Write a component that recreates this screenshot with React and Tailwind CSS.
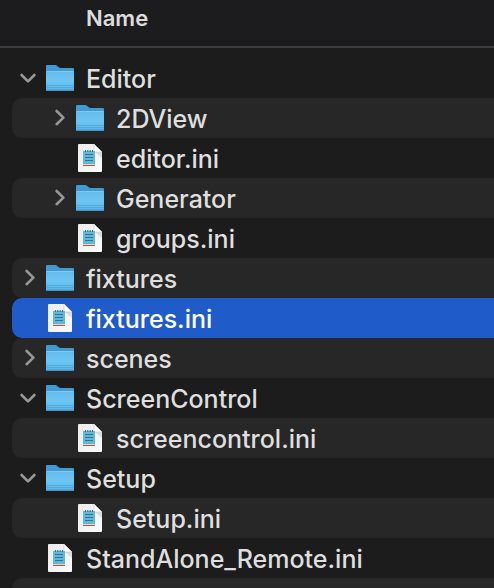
import React, { useState } from 'react';
import clsx from 'clsx';

const FILES = [
  {
    name: 'Editor',
    children: [
      { name: '2DView', children: [] },
      { name: 'editor.ini' },
      { name: 'Generator', children: [] },
      { name: 'groups.ini' },
    ],
  },
  { name: 'fixtures', children: [] },
  { name: 'fixtures.ini' },
  { name: 'scenes', children: [] },
  { name: 'ScreenControl', children: [{ name: 'screencontrol.ini' }] },
  { name: 'Setup', children: [{ name: 'Setup.ini' }] },
  { name: 'StandAlone_Remote.ini' },
];

// Flatten the tree to the rows that are visible right now
const flatten = (nodes, expanded, depth = 0) =>
  nodes.flatMap((node) => {
    const row = { name: node.name, isFolder: !!node.children, depth };
    if (!node.children || !expanded.includes(node.name)) return [row];
    return [row, ...flatten(node.children, expanded, depth + 1)];
  });

const FolderIcon = () => (
  <svg width="28" height="28" viewBox="0 -1 28 28" aria-hidden="true">
    <defs>
      <linearGradient id="folderFront" x1="0" y1="0" x2="0" y2="1">
        <stop offset="0" stopColor="#64bbeb" />
        <stop offset="0.5" stopColor="#6cc5f2" />
        <stop offset="1" stopColor="#58b2e4" />
      </linearGradient>
    </defs>
    <path d="M0 1.2Q0 0 1.2 0H9.3Q10.2 0 11 0.7L12.6 2.2Q13.5 3 14.6 3H26.8Q28 3 28 4.2V14H0Z" fill="#419bd2" />
    <path d="M0 7.2Q0 6 1.2 6H26.8Q28 6 28 7.2V24.8Q28 26 26.8 26H1.2Q0 26 0 24.8Z" fill="url(#folderFront)" />
    <path d="M0.5 6.5H27.5" stroke="#7fcaf2" strokeWidth="1" />
    <path d="M0 20.5H28M0 22.5H28" stroke="#52acde" strokeWidth="1" />
    <path d="M0 24.8H28Q28 26 26.8 26H1.2Q0 26 0 24.8Z" fill="#3f93c8" />
  </svg>
);

const FileIcon = () => (
  <svg width="24" height="28" viewBox="0 0 24 28" aria-hidden="true">
    <defs>
      <linearGradient id="pageFill" x1="0" y1="0" x2="1" y2="1">
        <stop offset="0" stopColor="#ececec" />
        <stop offset="1" stopColor="#fafafa" />
      </linearGradient>
    </defs>
    <path d="M1 0H16L24 8V27Q24 28 23 28H1Q0 28 0 27V1Q0 0 1 0Z" fill="url(#pageFill)" />
    <path d="M17 8H24V14Z" fill="#dcdcdc" />
    <path d="M16 0L24 8H17Q16 8 16 7Z" fill="#ffffff" />
    <path d="M16 0V7Q16 8 17 8H24" fill="none" stroke="#c8c8c8" strokeWidth="0.6" />
    <rect x="5" y="20" width="12" height="2" fill="#a0623c" />
    <rect x="5" y="20" width="12" height="1" fill="#e6d6c8" />
    <rect x="5" y="7" width="12" height="13" fill="#62b8da" />
    <path d="M7.5 6V8M9.8 6V8M12.2 6V8M14.5 6V8" stroke="#2f7391" strokeWidth="1.1" />
    <path d="M7 10.5H15M7 13.5H15M7 16.5H15" stroke="#2d7696" strokeWidth="1" />
  </svg>
);

const Chevron = ({ open }) => (
  <svg width="20" height="20" viewBox="0 0 20 20" fill="none" stroke="#979797" strokeWidth="2.6" strokeLinecap="round" strokeLinejoin="round" aria-hidden="true">
    {open ? <path d="M1.6 7L8 13.4L14.4 7" /> : <path d="M6.6 3L13.4 9.6L6.6 16.2" />}
  </svg>
);

const Row = ({ row, open, striped, selected, onToggle, onSelect }) => (
  <li
    className={clsx(
      'flex h-10 items-center rounded-l-[10px] pl-2',
      selected ? 'bg-[#1f5bc9] text-white' : 'text-[#dfdfdf]',
      !selected && striped && 'bg-[#272727]'
    )}
  >
    {row.depth > 0 && <span className="w-[30px] shrink-0" />}
    <span className="mr-1 size-5 shrink-0">
      {row.isFolder && (
        <button type="button" className="block" aria-label={`Toggle ${row.name}`} aria-expanded={open} onClick={onToggle}>
          <Chevron open={open} />
        </button>
      )}
    </span>
    <button type="button" className="flex min-w-0 flex-1 items-center gap-[10px] text-left" onClick={onSelect}>
      <span className="flex w-8 shrink-0 justify-center">{row.isFolder ? <FolderIcon /> : <FileIcon />}</span>
      <span className="truncate pt-0.5 text-[25px] leading-9 font-medium">{row.name}</span>
    </button>
  </li>
);

const App = () => {
  const [expanded, setExpanded] = useState(['Editor', 'ScreenControl', 'Setup']);
  const [selected, setSelected] = useState('fixtures.ini');

  const toggle = (name) => {
    setExpanded((prev) => (prev.includes(name) ? prev.filter((n) => n !== name) : [...prev, name]));
  };

  const rows = flatten(FILES, expanded);

  return (
    <div className="h-screen overflow-hidden bg-[#1c1c1c] font-['Inter',sans-serif]">
      {/* Column header */}
      <header className="flex h-12 border-b-2 border-[#3c3c3c] bg-[#1c1c1e] pt-1 pl-[86px]">
        <h1 className="text-[22px] leading-7 font-semibold text-[#dcdcdc]">Name</h1>
      </header>

      {/* Rows */}
      <ul className="pt-[10px] pl-3">
        {rows.map((row, index) => (
          <Row
            key={row.name}
            row={row}
            open={expanded.includes(row.name)}
            striped={index % 2 === 1}
            selected={row.name === selected}
            onToggle={() => toggle(row.name)}
            onSelect={() => setSelected(row.name)}
          />
        ))}
        {/* Empty striped row below the last file */}
        <li className="h-10 rounded-l-[10px] bg-[#272727]" aria-hidden="true" />
      </ul>
    </div>
  );
};

export default App;
